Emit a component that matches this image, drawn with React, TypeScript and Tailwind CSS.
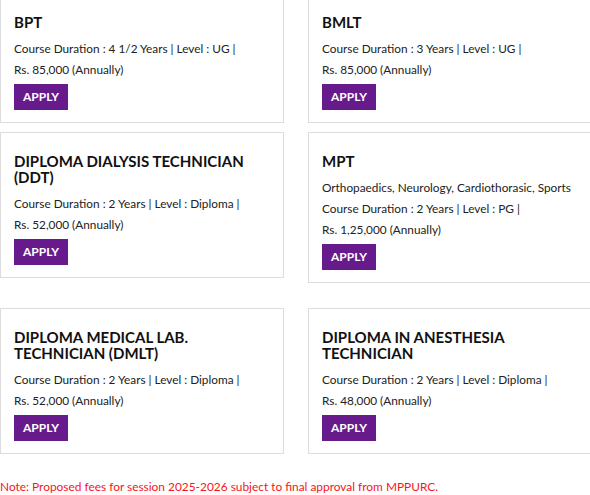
import React from "react"

interface Course {
  title: string
  lines: string[]
}

const rows: Course[][] = [
  [
    { title: "BPT", lines: ["Course Duration : 4 1/2 Years | Level : UG |", "Rs. 85,000 (Annually)"] },
    { title: "BMLT", lines: ["Course Duration : 3 Years | Level : UG |", "Rs. 85,000 (Annually)"] },
  ],
  [
    {
      title: "DIPLOMA DIALYSIS TECHNICIAN (DDT)",
      lines: ["Course Duration : 2 Years | Level : Diploma |", "Rs. 52,000 (Annually)"],
    },
    {
      title: "MPT",
      lines: [
        "Orthopaedics, Neurology, Cardiothorasic, Sports",
        "Course Duration : 2 Years | Level : PG |",
        "Rs. 1,25,000 (Annually)",
      ],
    },
  ],
  [
    {
      title: "DIPLOMA MEDICAL LAB. TECHNICIAN (DMLT)",
      lines: ["Course Duration : 2 Years | Level : Diploma |", "Rs. 52,000 (Annually)"],
    },
    {
      title: "DIPLOMA IN ANESTHESIA TECHNICIAN",
      lines: ["Course Duration : 2 Years | Level : Diploma |", "Rs. 48,000 (Annually)"],
    },
  ],
]

function CourseCard({ course }: { course: Course }) {
  return (
    <div className="w-[284px] shrink-0 border border-[#dcdcdc] bg-white px-[13px] pt-[20px] pb-[12px]">
      <h3 className="pr-6 text-[15px] leading-[16px] font-bold text-[#111]">{course.title}</h3>
      <div className="mt-[8px]">
        {course.lines.map((line) => (
          <p key={line} className="text-[11.8px] leading-[21px] text-[#222] whitespace-nowrap">
            {line}
          </p>
        ))}
      </div>
      <button className="mt-[4px] h-[26px] w-[54px] bg-[#661a8b] text-[12px] font-bold text-white">
        APPLY
      </button>
    </div>
  )
}

export default function App() {
  return (
    <div
      className="w-[590px] h-[495px] overflow-hidden bg-white"
      style={{ fontFamily: "Lato, 'Open Sans', sans-serif" }}
    >
      <div className="-mt-[7px] flex flex-col">
        {rows.map((row, i) => (
          <div key={i} className={"flex items-start gap-[24px] " + (i === 1 ? "mt-[9px]" : i === 2 ? "mt-[25px]" : "")}>
            {row.map((course) => (
              <CourseCard key={course.title} course={course} />
            ))}
          </div>
        ))}
        <p className="mt-[25px] text-[11.9px] leading-[16px] text-[#f5141e]">
          Note: Proposed fees for session 2025-2026 subject to final approval from MPPURC.
        </p>
      </div>
    </div>
  )
}
